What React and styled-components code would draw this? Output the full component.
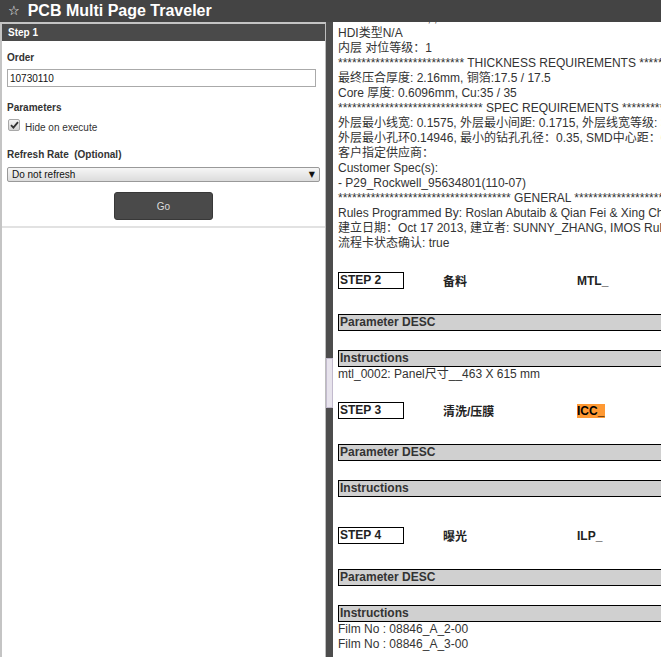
import React, { useLayoutEffect, useRef } from "react";
import styled, { createGlobalStyle } from "styled-components";

const GlobalStyle = createGlobalStyle`
  html, body {
    margin: 0;
    padding: 0;
    overflow: hidden;
    background: #fff;
  }
  body {
    font-family: "Liberation Sans", Arial, "Noto Sans CJK SC", sans-serif;
  }
`;

const Page = styled.div`
  height: 100vh;
  display: flex;
  flex-direction: column;
`;

const TitleBar = styled.div`
  height: 22px;
  flex: none;
  background: #444;
  color: #fff;
  display: flex;
  align-items: center;
  padding-left: 8px;
  gap: 8px;
`;

const Star = styled.span`
  font-family: "DejaVu Sans", sans-serif;
  font-size: 13px;
  line-height: 22px;
`;

const Title = styled.h1`
  margin: 0;
  font-size: 16px;
  font-weight: bold;
  line-height: 22px;
`;

const Main = styled.div`
  flex: 1;
  display: flex;
  min-height: 0;
`;

const LeftPane = styled.div`
  width: 326px;
  flex: none;
  box-sizing: border-box;
  border-left: 2px solid #c4c4c4;
  border-top: 2px solid #c4c4c4;
  border-right: 1px solid #bdbdbd;
  background: #fff;
`;

const PanelHeader = styled.div`
  height: 17px;
  line-height: 17px;
  background: #4a4a4a;
  color: #fff;
  font-size: 10px;
  font-weight: bold;
  padding-left: 6px;
`;

const Form = styled.div`
  padding: 0 5px 6px;
  border-bottom: 2px solid #e2e2e2;
`;

const Label = styled.div`
  font-size: 10px;
  font-weight: bold;
  color: #333;
  line-height: 15px;
  height: 15px;
  margin-top: ${(p) => p.$top}px;
`;

const TextInput = styled.input`
  display: block;
  box-sizing: border-box;
  width: 309px;
  height: 18px;
  margin: 4px 0 0;
  padding: 0 2px;
  border: 1px solid #aaa;
  font-family: "Liberation Sans", Arial, sans-serif;
  font-size: 10px;
  color: #111;
  outline: none;
`;

const CheckRow = styled.label`
  display: flex;
  align-items: center;
  gap: 5px;
  margin-top: 4px;
  height: 14px;
  font-size: 10px;
  color: #333;
  padding-left: 1px;
`;

const CheckBox = styled.span`
  width: 12px;
  height: 12px;
  box-sizing: border-box;
  border: 1px solid #a8a8a8;
  border-radius: 2px;
  background: linear-gradient(#f4f4f4, #d4d4d4);
  display: flex;
  align-items: center;
  justify-content: center;
  margin-top: -2px;
`;

const CheckText = styled.span`
  margin-top: 2px;
`;

const Select = styled.div`
  box-sizing: border-box;
  width: 313px;
  height: 15px;
  margin-top: 5px;
  border: 1px solid #999;
  border-radius: 2px;
  background: linear-gradient(#f6f6f6, #dcdcdc);
  display: flex;
  align-items: center;
  justify-content: space-between;
  padding: 0 4px;
  font-size: 10px;
  color: #111;
`;

const Arrow = styled.span`
  font-family: "DejaVu Sans", sans-serif;
  font-size: 8px;
  color: #111;
`;

const ButtonRow = styled.div`
  display: flex;
  justify-content: center;
  margin-top: 10px;
`;

const GoButton = styled.button`
  width: 99px;
  height: 28px;
  background: #4a4a4a;
  border: 1px solid #383838;
  border-radius: 3px;
  color: #ddd;
  font-family: "Liberation Sans", Arial, sans-serif;
  font-size: 10px;
  cursor: pointer;
`;

const Splitter = styled.div`
  width: 7px;
  flex: none;
  background: #4d4d4d;
  display: flex;
  flex-direction: column;
`;

const SplitHandle = styled.div`
  margin-top: 336px;
  height: 50px;
  box-sizing: border-box;
  background: #e7e3ec;
  border: 1px solid #c2bacd;
`;

const RightPane = styled.div`
  flex: 1;
  min-width: 0;
  overflow: hidden;
  background: #fff;
`;

const Report = styled.div`
  width: 720px;
  padding: 0 5px;
  color: #333;
  font-size: 12px;
`;

const Line = styled.div`
  height: 15px;
  line-height: 15px;
  white-space: nowrap;
`;

const StepBlock = styled.div`
  margin-top: 20px;
  &:first-child {
    margin-top: 21px;
  }
`;

const StepRow = styled.div`
  display: grid;
  grid-template-columns: 105px 134px 1fr;
  align-items: center;
  height: 17px;
  font-weight: bold;
  color: #222;
`;

const StepTag = styled.div`
  width: 66px;
  height: 17px;
  box-sizing: border-box;
  border: 1px solid #000;
  line-height: 15px;
  padding-left: 1px;
`;

const Code = styled.span`
  background: ${(p) => (p.$hot ? "#ff9933" : "transparent")};
  color: ${(p) => (p.$hot ? "#000" : "#222")};
  padding-right: 1px;
`;

const Bar = styled.div`
  height: 17px;
  box-sizing: border-box;
  border: 1px solid #000;
  background: #d0d0d0;
  line-height: 15px;
  padding-left: 1px;
  font-weight: bold;
  color: #333;
  margin-top: ${(p) => p.$top}px;
`;

const InstructionBody = styled.div`
  min-height: 10px;
`;

const stars = (n) => "*".repeat(n);

const header = [
  "HDI Level: none , ,",
  "HDI类型N/A",
  "内层 对位等级：1",
  `${stars(27)} THICKNESS REQUIREMENTS ${stars(27)}`,
  "最终压合厚度: 2.16mm, 铜箔:17.5 / 17.5",
  "Core 厚度: 0.6096mm, Cu:35 / 35",
  `${stars(31)} SPEC REQUIREMENTS ${stars(31)}`,
  "外层最小线宽: 0.1575, 外层最小间距: 0.1715, 外层线宽等级: 3",
  "外层最小孔环0.14946, 最小的钻孔孔径：0.35, SMD中心距：0.5",
  "客户指定供应商：",
  "Customer Spec(s):",
  "- P29_Rockwell_95634801(110-07)",
  `${stars(37)} GENERAL ${stars(37)}`,
  "Rules Programmed By: Roslan Abutaib & Qian Fei & Xing Chen",
  "建立日期：Oct 17 2013, 建立者: SUNNY_ZHANG, IMOS Rules",
  "流程卡状态确认: true",
];

const steps = [
  {
    no: 2,
    name: "备料",
    code: "MTL_",
    instructions: ["mtl_0002: Panel尺寸__463 X 615 mm"],
  },
  { no: 3, name: "清洗/压膜", code: "ICC_", hot: true, instructions: [] },
  {
    no: 4,
    name: "曝光",
    code: "ILP_",
    instructions: ["Film No : 08846_A_2-00", "Film No : 08846_A_3-00"],
  },
];

const Step = ({ step }) => (
  <StepBlock>
    <StepRow>
      <StepTag>STEP {step.no}</StepTag>
      <div>{step.name}</div>
      <div>
        <Code $hot={step.hot}>{step.code}</Code>
      </div>
    </StepRow>
    <Bar $top={25}>Parameter DESC</Bar>
    <Bar $top={19}>Instructions</Bar>
    <InstructionBody>
      {step.instructions.map((t) => (
        <Line key={t}>{t}</Line>
      ))}
    </InstructionBody>
  </StepBlock>
);

export default function App() {
  const paneRef = useRef(null);

  useLayoutEffect(() => {
    if (paneRef.current) paneRef.current.scrollTop = 11;
  }, []);

  return (
    <Page>
      <GlobalStyle />
      <TitleBar>
        <Star>☆</Star>
        <Title>PCB Multi Page Traveler</Title>
      </TitleBar>
      <Main>
        <LeftPane>
          <PanelHeader>Step 1</PanelHeader>
          <Form>
            <Label $top={9}>Order</Label>
            <TextInput defaultValue="10730110" />
            <Label $top={13}>Parameters</Label>
            <CheckRow>
              <CheckBox>
                <svg width="9" height="8" viewBox="0 0 9 8">
                  <path d="M1 4.2 L3.4 6.6 L8 1.2" fill="none" stroke="#333" strokeWidth="1.8" />
                </svg>
              </CheckBox>
              <CheckText>Hide on execute</CheckText>
            </CheckRow>
            <Label $top={14}>Refresh Rate&nbsp; (Optional)</Label>
            <Select>
              <span>Do not refresh</span>
              <Arrow>▼</Arrow>
            </Select>
            <ButtonRow>
              <GoButton>Go</GoButton>
            </ButtonRow>
          </Form>
        </LeftPane>
        <Splitter>
          <SplitHandle />
        </Splitter>
        <RightPane ref={paneRef}>
          <Report>
            {header.map((t, i) => (
              <Line key={i}>{t}</Line>
            ))}
            <div>
              {steps.map((s) => (
                <Step key={s.no} step={s} />
              ))}
            </div>
            <Line />
            <Line />
          </Report>
        </RightPane>
      </Main>
    </Page>
  );
}
